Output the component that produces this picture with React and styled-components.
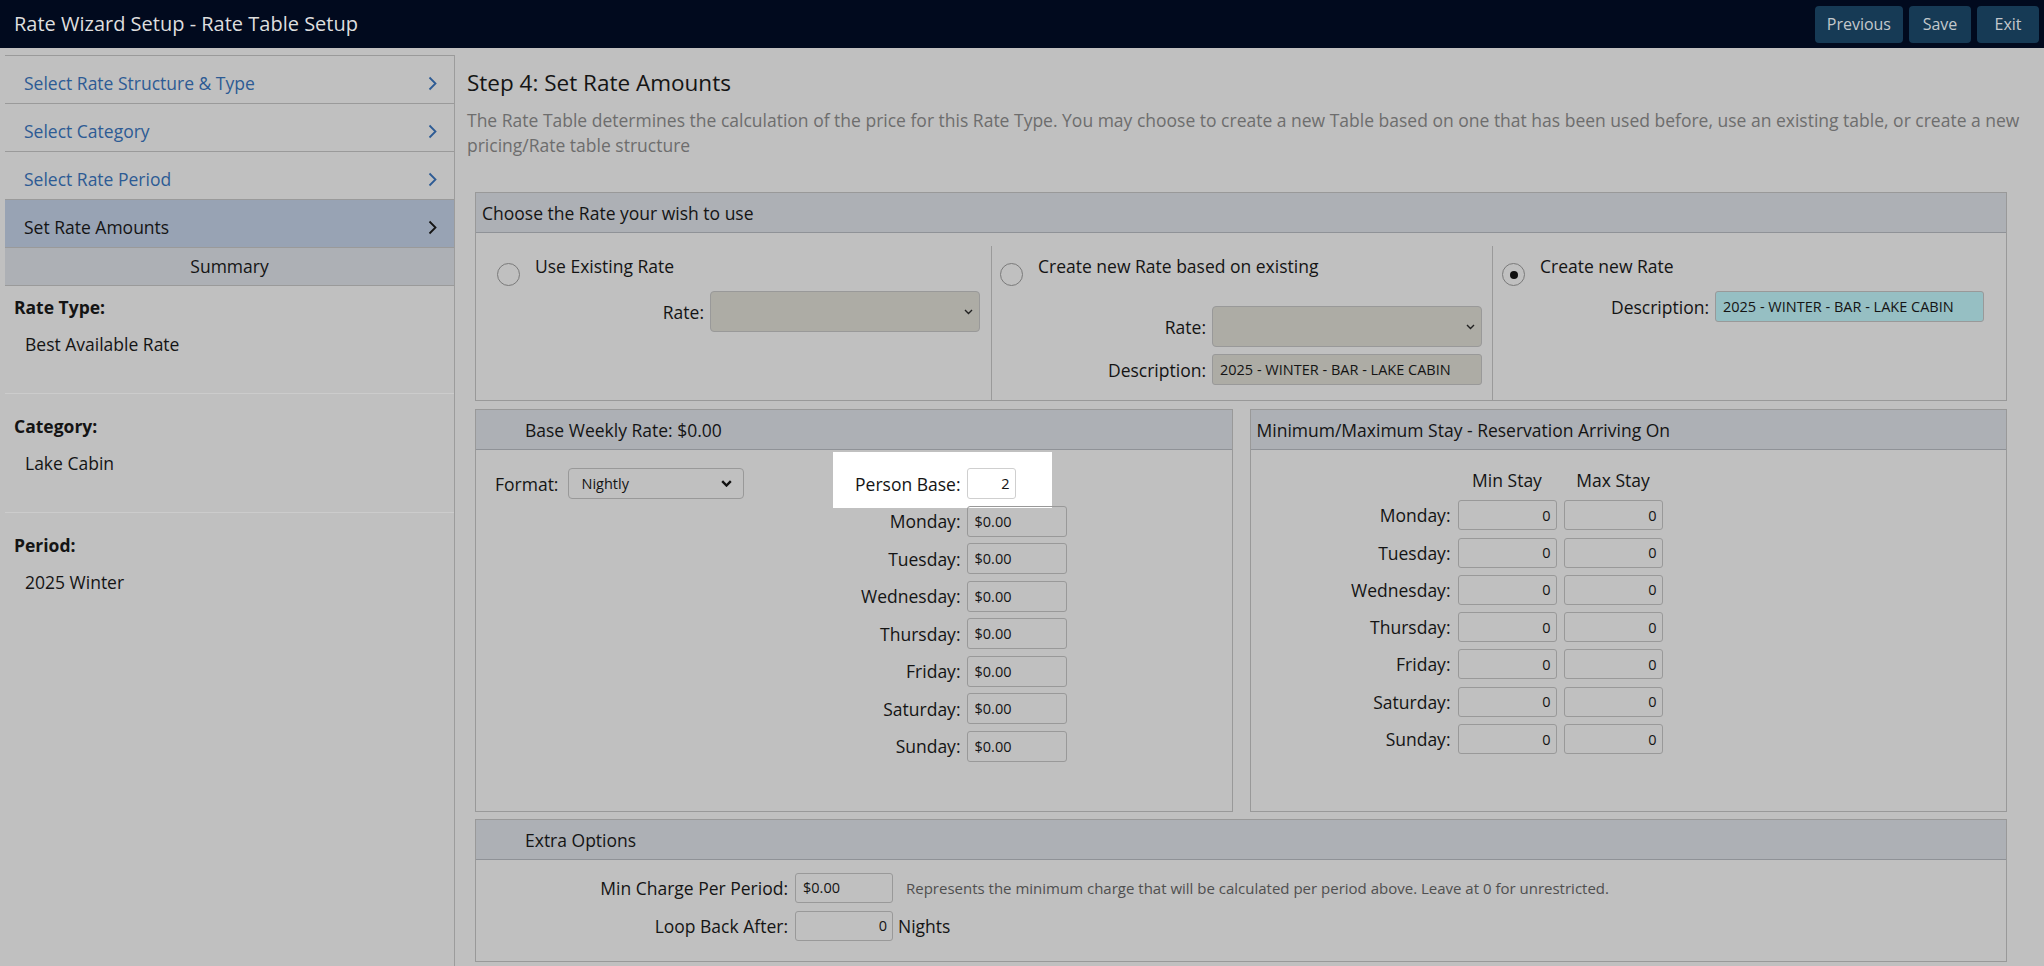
import React from 'react'
import styled, { createGlobalStyle } from 'styled-components'

const GlobalStyle = createGlobalStyle`
  html, body {
    margin: 0;
    padding: 0;
  }
  body {
    background: #c0c0c0;
    font-family: "Open Sans", "Liberation Sans", sans-serif;
    font-size: 17.5px;
    line-height: 24px;
    color: #141414;
    overflow: hidden;
  }
  * {
    box-sizing: border-box;
  }
`

const TopBar = styled.header`
  height: 48px;
  background: #010a1e;
  display: flex;
  align-items: center;
  justify-content: space-between;
  padding: 0 5px 0 14px;
`

const AppTitle = styled.h1`
  margin: 0;
  font-size: 20px;
  font-weight: 400;
  line-height: 28px;
  color: #dedede;
`

const Actions = styled.div`
  display: flex;
  gap: 6px;
`

const ActionButton = styled.button`
  height: 37px;
  min-width: 62px;
  padding: 0 12px;
  border: none;
  border-radius: 4px;
  background: #163a55;
  color: #c3c8cc;
  font-family: "Open Sans", sans-serif;
  font-size: 16px;
`

const Layout = styled.div`
  display: flex;
  min-height: calc(100vh - 48px);
`

const Sidebar = styled.aside`
  width: 450px;
  flex-shrink: 0;
  margin: 7px 0 0 5px;
  border-right: 1px solid #9c9c9c;
`

const NavList = styled.nav`
  border-top: 1px solid #9a9a9a;
`

const NavItem = styled.div`
  height: 48px;
  display: flex;
  align-items: center;
  justify-content: space-between;
  padding: 7px 17px 0 19px;
  border-bottom: 1px solid #9a9a9a;
  color: ${p => (p.$active ? '#141414' : '#2d5b94')};
  background: ${p => (p.$active ? '#98a3b4' : 'transparent')};
`

const SummaryBar = styled.div`
  height: 38px;
  line-height: 37px;
  text-align: center;
  background: #adb0b5;
  border-bottom: 1px solid #9a9a9a;
`

const SummarySection = styled.section`
  padding: ${p => (p.$first ? '9px' : '20px')} 0 37px 9px;
  border-bottom: 1px solid #cccccc;

  &:last-child {
    border-bottom: none;
  }
`

const SummaryLabel = styled.div`
  font-weight: 700;
`

const SummaryValue = styled.div`
  margin-top: 13px;
  padding-left: 11px;
`

const Main = styled.main`
  flex: 1;
  padding: 0 14px 0 12px;
`

const PageTitle = styled.h2`
  margin: 22px 0 0;
  font-size: 22.5px;
  font-weight: 400;
  line-height: 25px;
`

const Intro = styled.p`
  margin: 13px 0 0;
  color: #6d6d6d;
  line-height: 25px;
`

const Panels = styled.div`
  margin: 34px 23px 0 8px;
`

const Panel = styled.section`
  border: 1px solid #999999;
  margin-top: ${p => p.$gap || 0}px;
`

const PanelHeader = styled.div`
  height: 40px;
  display: flex;
  align-items: center;
  padding: 1px 0 0 ${p => p.$indent}px;
  background: #adb0b5;
  border-bottom: 1px solid #8f9297;
`

const RateColumns = styled.div`
  display: grid;
  grid-template-columns: 515px 501px 1fr;
  padding-top: 13px;
`

const RateColumn = styled.div`
  border-left: ${p => (p.$divider ? '1px solid #9a9a9a' : 'none')};
  padding: 8px ${p => p.$right}px 15px ${p => p.$left}px;
`

const RadioRow = styled.div`
  display: flex;
  gap: 15px;
  min-height: 32px;
`

const RadioDot = styled.span`
  width: 23px;
  height: 23px;
  margin-top: 9px;
  flex-shrink: 0;
  border: 1px solid #7a7a7a;
  border-radius: 50%;
  display: flex;
  align-items: center;
  justify-content: center;

  &::after {
    content: '';
    width: 8px;
    height: 8px;
    border-radius: 50%;
    background: ${p => (p.$checked ? '#111' : 'transparent')};
  }
`

const FieldStack = styled.div`
  display: flex;
  flex-direction: column;
  gap: 7px;
  margin-top: ${p => p.$top}px;
`

const FieldRow = styled.div`
  display: flex;
  align-items: center;
  justify-content: flex-end;
  gap: 6px;
`

const SelectBox = styled.div`
  width: ${p => p.$width}px;
  height: ${p => p.$height}px;
  display: flex;
  align-items: center;
  justify-content: space-between;
  padding: 0 ${p => p.$padRight}px 0 12px;
  background: ${p => p.$bg};
  border: 1px solid #999999;
  border-radius: 4px;
  font-size: 14.5px;
  color: #141414;
`

const TextBox = styled.input`
  position: relative;
  z-index: 1;
  width: ${p => p.$width}px;
  height: ${p => p.$height || 31}px;
  padding: 0 ${p => (p.$right ? 5 : 7)}px;
  text-align: ${p => (p.$right ? 'right' : 'left')};
  background: ${p => p.$bg || 'transparent'};
  border: 1px solid ${p => (p.$lit ? '#cfcfcf' : '#999999')};
  border-radius: 3px;
  font-family: "Open Sans", sans-serif;
  font-size: 14.5px;
  color: #141414;
  outline: none;
`

const SplitRow = styled.div`
  display: grid;
  grid-template-columns: 1fr 1fr;
  column-gap: 17px;
  margin-top: 8px;
`

const BaseBody = styled.div`
  display: flex;
  justify-content: space-between;
  align-items: flex-start;
  padding: 18px 0 49px;
`

const FormatField = styled.div`
  display: flex;
  align-items: center;
  gap: 10px;
  padding-left: 19px;
`

const RateForm = styled.div`
  position: relative;
  display: grid;
  grid-template-columns: auto 100px;
  column-gap: 6px;
  row-gap: 6.5px;
  margin-right: 165px;
`

const Spotlight = styled.div`
  position: absolute;
  top: -16px;
  right: 15px;
  width: 219px;
  height: 56px;
  background: #ffffff;
`

const RowLabel = styled.label`
  position: relative;
  z-index: 1;
  justify-self: end;
  align-self: center;
`

const StayBody = styled.div`
  padding-top: 18px;
`

const StayGrid = styled.div`
  display: grid;
  grid-template-columns: 120px 99px 99px;
  column-gap: 7px;
  row-gap: 7.3px;
  margin-left: 80px;
`

const ColumnHead = styled.div`
  text-align: center;
  margin-bottom: 1px;
`

const ExtraGrid = styled.div`
  display: grid;
  grid-template-columns: 312px auto;
  column-gap: 7px;
  row-gap: 8px;
  padding: 13px 0 20px;
`

const InlineField = styled.div`
  display: flex;
  align-items: center;
  gap: ${p => p.$gap}px;
`

const HelpText = styled.span`
  font-size: 15px;
  color: #4f4f4f;
`

const NavChevron = () => (
  <svg width="9" height="15" viewBox="0 0 9 15">
    <path d="M1.5 1.5 L7.5 7.5 L1.5 13.5" fill="none" stroke="currentColor" strokeWidth="1.8" />
  </svg>
)

const DropChevron = ({ bold }) =>
  bold ? (
    <svg width="11" height="7" viewBox="0 0 11 7">
      <path d="M1.2 1.2 L5.5 5.5 L9.8 1.2" fill="none" stroke="#111" strokeWidth="2.4" />
    </svg>
  ) : (
    <svg width="9" height="6" viewBox="0 0 9 6">
      <path d="M1 1 L4.5 4.5 L8 1" fill="none" stroke="#222" strokeWidth="1.4" />
    </svg>
  )

const Radio = ({ checked, label }) => (
  <RadioRow>
    <RadioDot $checked={checked} />
    <span>{label}</span>
  </RadioRow>
)

const steps = [
  { name: 'Select Rate Structure & Type' },
  { name: 'Select Category' },
  { name: 'Select Rate Period' },
  { name: 'Set Rate Amounts', active: true },
]

const summary = [
  { label: 'Rate Type:', value: 'Best Available Rate' },
  { label: 'Category:', value: 'Lake Cabin' },
  { label: 'Period:', value: '2025 Winter' },
]

const days = ['Monday', 'Tuesday', 'Wednesday', 'Thursday', 'Friday', 'Saturday', 'Sunday']

const description = '2025 - WINTER - BAR - LAKE CABIN'

const App = () => {
  return (
    <>
      <GlobalStyle />
      <TopBar>
        <AppTitle>Rate Wizard Setup - Rate Table Setup</AppTitle>
        <Actions>
          <ActionButton>Previous</ActionButton>
          <ActionButton>Save</ActionButton>
          <ActionButton>Exit</ActionButton>
        </Actions>
      </TopBar>
      <Layout>
        <Sidebar>
          <NavList>
            {steps.map(step => (
              <NavItem key={step.name} $active={step.active}>
                <span>{step.name}</span>
                <NavChevron />
              </NavItem>
            ))}
          </NavList>
          <SummaryBar>Summary</SummaryBar>
          {summary.map((item, i) => (
            <SummarySection key={item.label} $first={i === 0}>
              <SummaryLabel>{item.label}</SummaryLabel>
              <SummaryValue>{item.value}</SummaryValue>
            </SummarySection>
          ))}
        </Sidebar>
        <Main>
          <PageTitle>Step 4: Set Rate Amounts</PageTitle>
          <Intro>
            The Rate Table determines the calculation of the price for this Rate Type. You may choose to create a new
            Table based on one that has been used before, use an existing table, or create a new pricing/Rate table
            structure
          </Intro>
          <Panels>
            <Panel>
              <PanelHeader $indent={6}>Choose the Rate your wish to use</PanelHeader>
              <RateColumns>
                <RateColumn $left={21} $right={11}>
                  <Radio label="Use Existing Rate" />
                  <FieldStack $top={5}>
                    <FieldRow>
                      <span>Rate:</span>
                      <SelectBox $width={270} $height={41} $bg="#adaca5" $padRight={6}>
                        <span />
                        <DropChevron />
                      </SelectBox>
                    </FieldRow>
                  </FieldStack>
                </RateColumn>
                <RateColumn $divider $left={8} $right={10}>
                  <Radio label="Create new Rate based on existing" />
                  <FieldStack $top={20}>
                    <FieldRow>
                      <span>Rate:</span>
                      <SelectBox $width={270} $height={41} $bg="#adaca5" $padRight={6}>
                        <span />
                        <DropChevron />
                      </SelectBox>
                    </FieldRow>
                    <FieldRow>
                      <span>Description:</span>
                      <TextBox readOnly value={description} $width={270} $height={31} $bg="#adaca5" />
                    </FieldRow>
                  </FieldStack>
                </RateColumn>
                <RateColumn $divider $left={9} $right={22}>
                  <Radio checked label="Create new Rate" />
                  <FieldStack $top={5}>
                    <FieldRow>
                      <span>Description:</span>
                      <TextBox readOnly value={description} $width={269} $height={31} $bg="#96bfc3" />
                    </FieldRow>
                  </FieldStack>
                </RateColumn>
              </RateColumns>
            </Panel>

            <SplitRow>
              <Panel>
                <PanelHeader $indent={49}>Base Weekly Rate: $0.00</PanelHeader>
                <BaseBody>
                  <FormatField>
                    <span>Format:</span>
                    <SelectBox $width={176} $height={31} $bg="transparent" $padRight={11}>
                      <span>Nightly</span>
                      <DropChevron bold />
                    </SelectBox>
                  </FormatField>
                  <RateForm>
                    <Spotlight />
                    <RowLabel>Person Base:</RowLabel>
                    <TextBox readOnly value="2" $width={49} $right $lit $bg="#ffffff" />
                    {days.map(day => (
                      <React.Fragment key={day}>
                        <RowLabel>{day}:</RowLabel>
                        <TextBox readOnly value="$0.00" $width={100} />
                      </React.Fragment>
                    ))}
                  </RateForm>
                </BaseBody>
              </Panel>
              <Panel>
                <PanelHeader $indent={6}>Minimum/Maximum Stay - Reservation Arriving On</PanelHeader>
                <StayBody>
                  <StayGrid>
                    <span />
                    <ColumnHead>Min Stay</ColumnHead>
                    <ColumnHead>Max Stay</ColumnHead>
                    {days.map(day => (
                      <React.Fragment key={day}>
                        <RowLabel>{day}:</RowLabel>
                        <TextBox readOnly value="0" $width={99} $height={30} $right />
                        <TextBox readOnly value="0" $width={99} $height={30} $right />
                      </React.Fragment>
                    ))}
                  </StayGrid>
                </StayBody>
              </Panel>
            </SplitRow>

            <Panel $gap={7}>
              <PanelHeader $indent={49}>Extra Options</PanelHeader>
              <ExtraGrid>
                <RowLabel>Min Charge Per Period:</RowLabel>
                <InlineField $gap={13}>
                  <TextBox readOnly value="$0.00" $width={98} $height={30} />
                  <HelpText>
                    Represents the minimum charge that will be calculated per period above. Leave at 0 for unrestricted.
                  </HelpText>
                </InlineField>
                <RowLabel>Loop Back After:</RowLabel>
                <InlineField $gap={5}>
                  <TextBox readOnly value="0" $width={98} $height={30} $right />
                  <span>Nights</span>
                </InlineField>
              </ExtraGrid>
            </Panel>
          </Panels>
        </Main>
      </Layout>
    </>
  )
}

export default App
